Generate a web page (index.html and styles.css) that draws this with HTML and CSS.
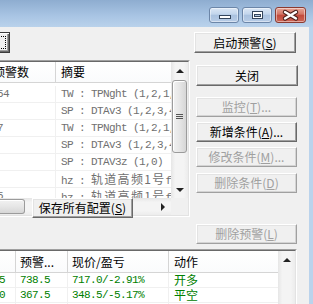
FILE: index.html
```html
<!DOCTYPE html>
<html lang="zh-CN">
<head>
	<meta charset="UTF-8">
	<meta name="viewport" content="width=device-width, initial-scale=1.0">
	<title>预警设置</title>
	<link rel="stylesheet" href="styles.css">
</head>
<body>
	<div class="window">
		<div class="titlebar">
			<div class="cap-btn cap-min">
				<svg width="28" height="14" viewBox="0 0 28 14"><rect x="9.5" y="7.5" width="11" height="3" fill="#fff" stroke="#34455c"/></svg>
			</div>
			<div class="cap-btn cap-max">
				<svg width="28" height="14" viewBox="0 0 28 14"><rect x="9.5" y="3.5" width="10" height="7" fill="#fff" stroke="#34455c"/><rect x="11.5" y="6.5" width="6" height="2" fill="#b4cae4" stroke="#34455c"/></svg>
			</div>
			<div class="cap-btn cap-close">
				<svg width="29" height="14" viewBox="0 0 29 14"><path d="M9 4 L20 10.5 M20 4 L9 10.5" stroke="#4a1f1a" stroke-width="4.4" stroke-linecap="round"/><path d="M9 4 L20 10.5 M20 4 L9 10.5" stroke="#fff" stroke-width="2.4" stroke-linecap="round"/></svg>
			</div>
		</div>

		<div class="client">
			<div class="upper">
				<div class="left-pane">
					<div class="btn btn-default cut-btn"><span class="focus-rect"></span></div>

					<div class="list top-list">
						<div class="list-inner">
							<div class="lv">
								<div class="lv-head">
									<div class="cell c-count"><span class="shift">预警数</span></div>
									<div class="cell c-summary">摘要</div>
								</div>
								<div class="lv-body">
									<div class="row mono"><div class="cell c-count"><span class="shift-n">54</span></div><div class="cell c-summary">TW : TPNght (1,2,1,0)</div></div>
									<div class="row mono"><div class="cell c-count"></div><div class="cell c-summary">SP : DTAv3 (1,2,3,4)</div></div>
									<div class="row mono"><div class="cell c-count"><span class="shift-n">7</span></div><div class="cell c-summary">TW : TPNght (1,2,1,0)</div></div>
									<div class="row mono"><div class="cell c-count"></div><div class="cell c-summary">SP : DTAv3 (1,2,3,4)</div></div>
									<div class="row mono"><div class="cell c-count"></div><div class="cell c-summary">SP : DTAV3z (1,0)</div></div>
									<div class="row mono"><div class="cell c-count"></div><div class="cell c-summary">hz : <span class="cjk">轨道高频1号</span>f-1</div></div>
									<div class="row mono"><div class="cell c-count"><span class="shift-n">5</span></div><div class="cell c-summary">hz : <span class="cjk">轨道高频1号</span>f-2</div></div>
								</div>
							</div>
							<div class="vsb">
								<div class="sb-btn"><span class="arrow-up"></span></div>
								<div class="thumb-v"><span class="grip"></span></div>
								<div class="sb-track"></div>
								<div class="sb-btn"><span class="arrow-down"></span></div>
							</div>
							<div class="hsb">
								<div class="thumb-h"></div>
								<div class="sb-track"></div>
								<div class="sb-btn"><span class="arrow-right"></span></div>
							</div>
							<div class="corner"></div>
						</div>
					</div>

					<div class="btn save-btn">保存所有配置(<u>S</u>)</div>
				</div>

				<div class="right-pane">
					<div class="btn rb rb-start">启动预警(<u>S</u>)</div>
					<div class="btn rb rb-close">关闭</div>
					<div class="btn rb rb-monitor disabled">监控(<u>T</u>)...</div>
					<div class="btn rb rb-add">新增条件(<u>A</u>)...</div>
					<div class="btn rb rb-edit disabled">修改条件(<u>M</u>)...</div>
					<div class="btn rb rb-del disabled">删除条件(<u>D</u>)</div>
					<div class="btn rb rb-delwarn disabled">删除预警(<u>L</u>)</div>
				</div>
			</div>

			<div class="list bottom-list">
				<div class="list-inner">
					<div class="lv">
						<div class="lv-head bh">
							<div class="cell b1"></div>
							<div class="cell b2">预警...</div>
							<div class="cell b3">现价/盈亏</div>
							<div class="cell b4">动作</div>
						</div>
						<div class="lv-body">
							<div class="brow mono green"><div class="cell b1"><span class="shift-b">5</span></div><div class="cell b2">738.5</div><div class="cell b3">717.0/-2.91%</div><div class="cell b4"><span class="cjk-s">开多</span></div></div>
							<div class="brow mono green"><div class="cell b1"><span class="shift-b">0</span></div><div class="cell b2">367.5</div><div class="cell b3">348.5/-5.17%</div><div class="cell b4"><span class="cjk-s">平空</span></div></div>
							<div class="brow mono green"><div class="cell b1"><span class="shift-b">5</span></div><div class="cell b2">367.5</div><div class="cell b3">348.5/-5.17%</div><div class="cell b4"><span class="cjk-s">开空</span></div></div>
						</div>
					</div>
					<div class="vsb">
						<div class="sb-btn"><span class="arrow-up"></span></div>
						<div class="sb-track"></div>
					</div>
				</div>
			</div>
		</div>
	</div>
</body>
</html>
```

FILE: styles.css
```css
*{
	box-sizing: border-box;
}
html, body{
	margin: 0;
	padding: 0;
}
body{
	width: 313px;
	height: 304px;
	overflow: hidden;
	background-color: #f0f0f0;
	font-family: "Noto Sans CJK SC", "Liberation Sans", sans-serif;
	font-size: 12px;
	color: #000;
	cursor: default;
	user-select: none;
}
.window{
	display: flex;
	flex-direction: column;
	height: 304px;
}

/* title bar */
.titlebar{
	height: 27px;
	flex-shrink: 0;
	display: flex;
	justify-content: flex-end;
	align-items: flex-start;
	padding: 7px 7px 0 0;
	background: linear-gradient(#8eadd0, #a9c5e4 60%, #b9d2eb);
}
.cap-btn{
	width: 30px;
	height: 16px;
	margin-left: 3px;
	border: 1px solid #6c86a8;
	border-radius: 3px;
	background: linear-gradient(#dbe7f5, #c2d5ec 45%, #a9c1df 50%, #b7cce6);
	box-shadow: inset 0 0 0 1px rgba(255,255,255,0.45);
}
.cap-btn svg{
	display: block;
}
.cap-close{
	width: 31px;
	margin-left: 3px;
	border-color: #8b3b31;
	background: linear-gradient(#e6a597, #d47565 45%, #c2493b 50%, #cc6555);
}

/* client area */
.client{
	flex: 1;
	display: flex;
	flex-direction: column;
	overflow: hidden;
	border-right: 4px solid #bad3ec;
}
.upper{
	height: 222px;
	flex-shrink: 0;
	display: flex;
}
.left-pane{
	width: 190px;
	position: relative;
}
.right-pane{
	width: 119px;
	display: flex;
	flex-direction: column;
}

/* buttons */
.btn{
	display: flex;
	align-items: center;
	justify-content: center;
	white-space: nowrap;
	line-height: 1;
	background-color: #f0f0f0;
	border: 1px solid;
	border-color: #fff #696969 #696969 #fff;
	box-shadow: inset -1px -1px #a0a0a0, inset 1px 1px #e3e3e3;
}
.btn u{
	text-decoration-thickness: 1px;
	text-underline-offset: 1px;
}
.btn.disabled{
	color: #a0a0a0;
	border-color: #fff #a0a0a0 #a0a0a0 #fff;
	box-shadow: inset -1px -1px #d4d4d4, inset 1px 1px #e3e3e3;
}
.btn-default{
	border-color: #3c3c3c;
	box-shadow: inset 1px 1px #fff, inset -1px -1px #696969, inset -2px -2px #a0a0a0;
	position: relative;
}
.cut-btn{
	width: 100px;
	height: 21px;
	margin: 5px 0 0 -90px;
	padding: 3px;
}
.focus-rect{
	flex: 1;
	align-self: stretch;
	border: 1px dotted #000;
}
.save-btn{
	position: absolute;
	left: 32px;
	top: 171px;
	width: 101px;
	height: 20px;
}
.rb{
	width: 101px;
	height: 20px;
	margin-left: 6px;
}
.rb-start{
	width: 102px;
	height: 21px;
	margin: 5px 0 0 4px;
}
.rb-close{
	width: 102px;
	height: 21px;
	margin-top: 12px;
}
.rb-monitor{
	margin-top: 11px;
}
.rb-add{
	margin-top: 5px;
}
.rb-edit{
	margin-top: 5px;
}
.rb-del{
	margin-top: 6px;
}
.rb-delwarn{
	margin-top: 31px;
}

/* list views */
.list{
	border: 1px solid;
	border-color: #a0a0a0 #fff #fff #a0a0a0;
	margin-left: -2px;
}
.list-inner{
	height: 100%;
	border: 1px solid;
	border-color: #696969 #e3e3e3 #e3e3e3 #696969;
	display: grid;
}
.top-list{
	width: 192px;
	height: 157px;
	margin-top: 7px;
}
.top-list .list-inner{
	grid-template-columns: 171px 17px;
	grid-template-rows: 136px 17px;
}
.bottom-list{
	width: 299px;
	height: 80px;
	flex-shrink: 0;
}
.bottom-list .list-inner{
	grid-template-columns: 278px 17px;
	grid-template-rows: 1fr;
	border-bottom: none;
}
.lv{
	overflow: hidden;
	background-color: #fff;
}
.lv-head{
	display: flex;
	height: 21px;
	border-bottom: 1px solid #d5d5d5;
	background: linear-gradient(#fff, #fafbfc);
}
.lv-head .cell{
	border-right: 1px solid #d5d5d5;
	line-height: 20px;
}
.top-list .lv-body{
	padding-top: 3px;
}
.cell{
	flex-shrink: 0;
	overflow: hidden;
	white-space: nowrap;
}
.row{
	display: flex;
	height: 17px;
	border-bottom: 1px solid #f0f0f0;
	line-height: 16px;
	color: #707070;
}
.row .cell{
	border-right: 1px solid #f0f0f0;
}
.c-count{
	width: 56px;
}
.c-summary{
	width: 120px;
	padding-left: 5px;
	overflow: visible;
}
.shift{
	display: inline-block;
	margin-left: -7px;
}
.shift-n{
	display: inline-block;
	margin-left: -3px;
}
.mono{
	font-family: "Liberation Mono", "Noto Sans CJK SC", monospace;
	font-size: 11px;
	letter-spacing: -0.6px;
}
.cjk{
	font-family: "Noto Sans CJK SC", sans-serif;
	font-size: 12px;
	letter-spacing: 1.3px;
}
.cjk-s{
	font-family: "Noto Sans CJK SC", sans-serif;
	font-size: 12px;
	letter-spacing: 0;
}

/* bottom list columns */
.bh{
	height: 22px;
}
.bh .cell{
	line-height: 21px;
}
.brow{
	display: flex;
	height: 15px;
	border-bottom: 1px solid #f0f0f0;
	line-height: 14px;
}
.brow .cell{
	border-right: 1px solid #f0f0f0;
}
.green{
	color: #008000;
}
.b1{
	width: 16px;
}
.b2{
	width: 52px;
	padding-left: 4px;
}
.b3{
	width: 101px;
	padding-left: 4px;
}
.b4{
	flex: 1;
	padding-left: 5px;
}
.lv-head .b4, .brow .b4{
	border-right: none;
}
.shift-b{
	display: inline-block;
	margin-left: -1px;
}

/* scroll bars */
.vsb{
	display: flex;
	flex-direction: column;
	background: linear-gradient(to right, #e6e6e6, #f4f4f4 25%, #f4f4f4 75%, #ececec);
}
.hsb{
	display: flex;
	background: linear-gradient(#e6e6e6, #f4f4f4 25%, #f4f4f4 75%, #ececec);
}
.sb-btn{
	width: 17px;
	height: 17px;
	flex-shrink: 0;
	display: flex;
	align-items: center;
	justify-content: center;
}
.sb-track{
	flex: 1;
}
.corner{
	background-color: #f0f0f0;
}
.arrow-up{
	width: 0;
	height: 0;
	border-left: 4px solid transparent;
	border-right: 4px solid transparent;
	border-bottom: 4px solid #222;
}
.arrow-down{
	width: 0;
	height: 0;
	border-left: 4px solid transparent;
	border-right: 4px solid transparent;
	border-top: 4px solid #222;
}
.arrow-right{
	width: 0;
	height: 0;
	border-top: 4px solid transparent;
	border-bottom: 4px solid transparent;
	border-left: 4px solid #222;
}
.thumb-v{
	height: 73px;
	margin: 1px 1px 0 1px;
	border: 1px solid #9b9b9b;
	border-radius: 3px;
	background: linear-gradient(to right, #f2f2f2, #e6e6e6 50%, #d6d6d6);
	box-shadow: inset 1px 1px #fff;
	display: flex;
	align-items: center;
	justify-content: center;
}
.grip{
	width: 7px;
	height: 5px;
	border-top: 1px solid #555;
	border-bottom: 1px solid #555;
	background: linear-gradient(transparent 1px, #555 1px, #555 2px, transparent 2px);
}
.thumb-h{
	width: 25px;
	margin: 1px 0 1px 0;
	border: 1px solid #9b9b9b;
	border-left: none;
	border-radius: 0 3px 3px 0;
	background: linear-gradient(#f2f2f2, #e6e6e6 50%, #d6d6d6);
	box-shadow: inset 0 1px #fff;
}
```
